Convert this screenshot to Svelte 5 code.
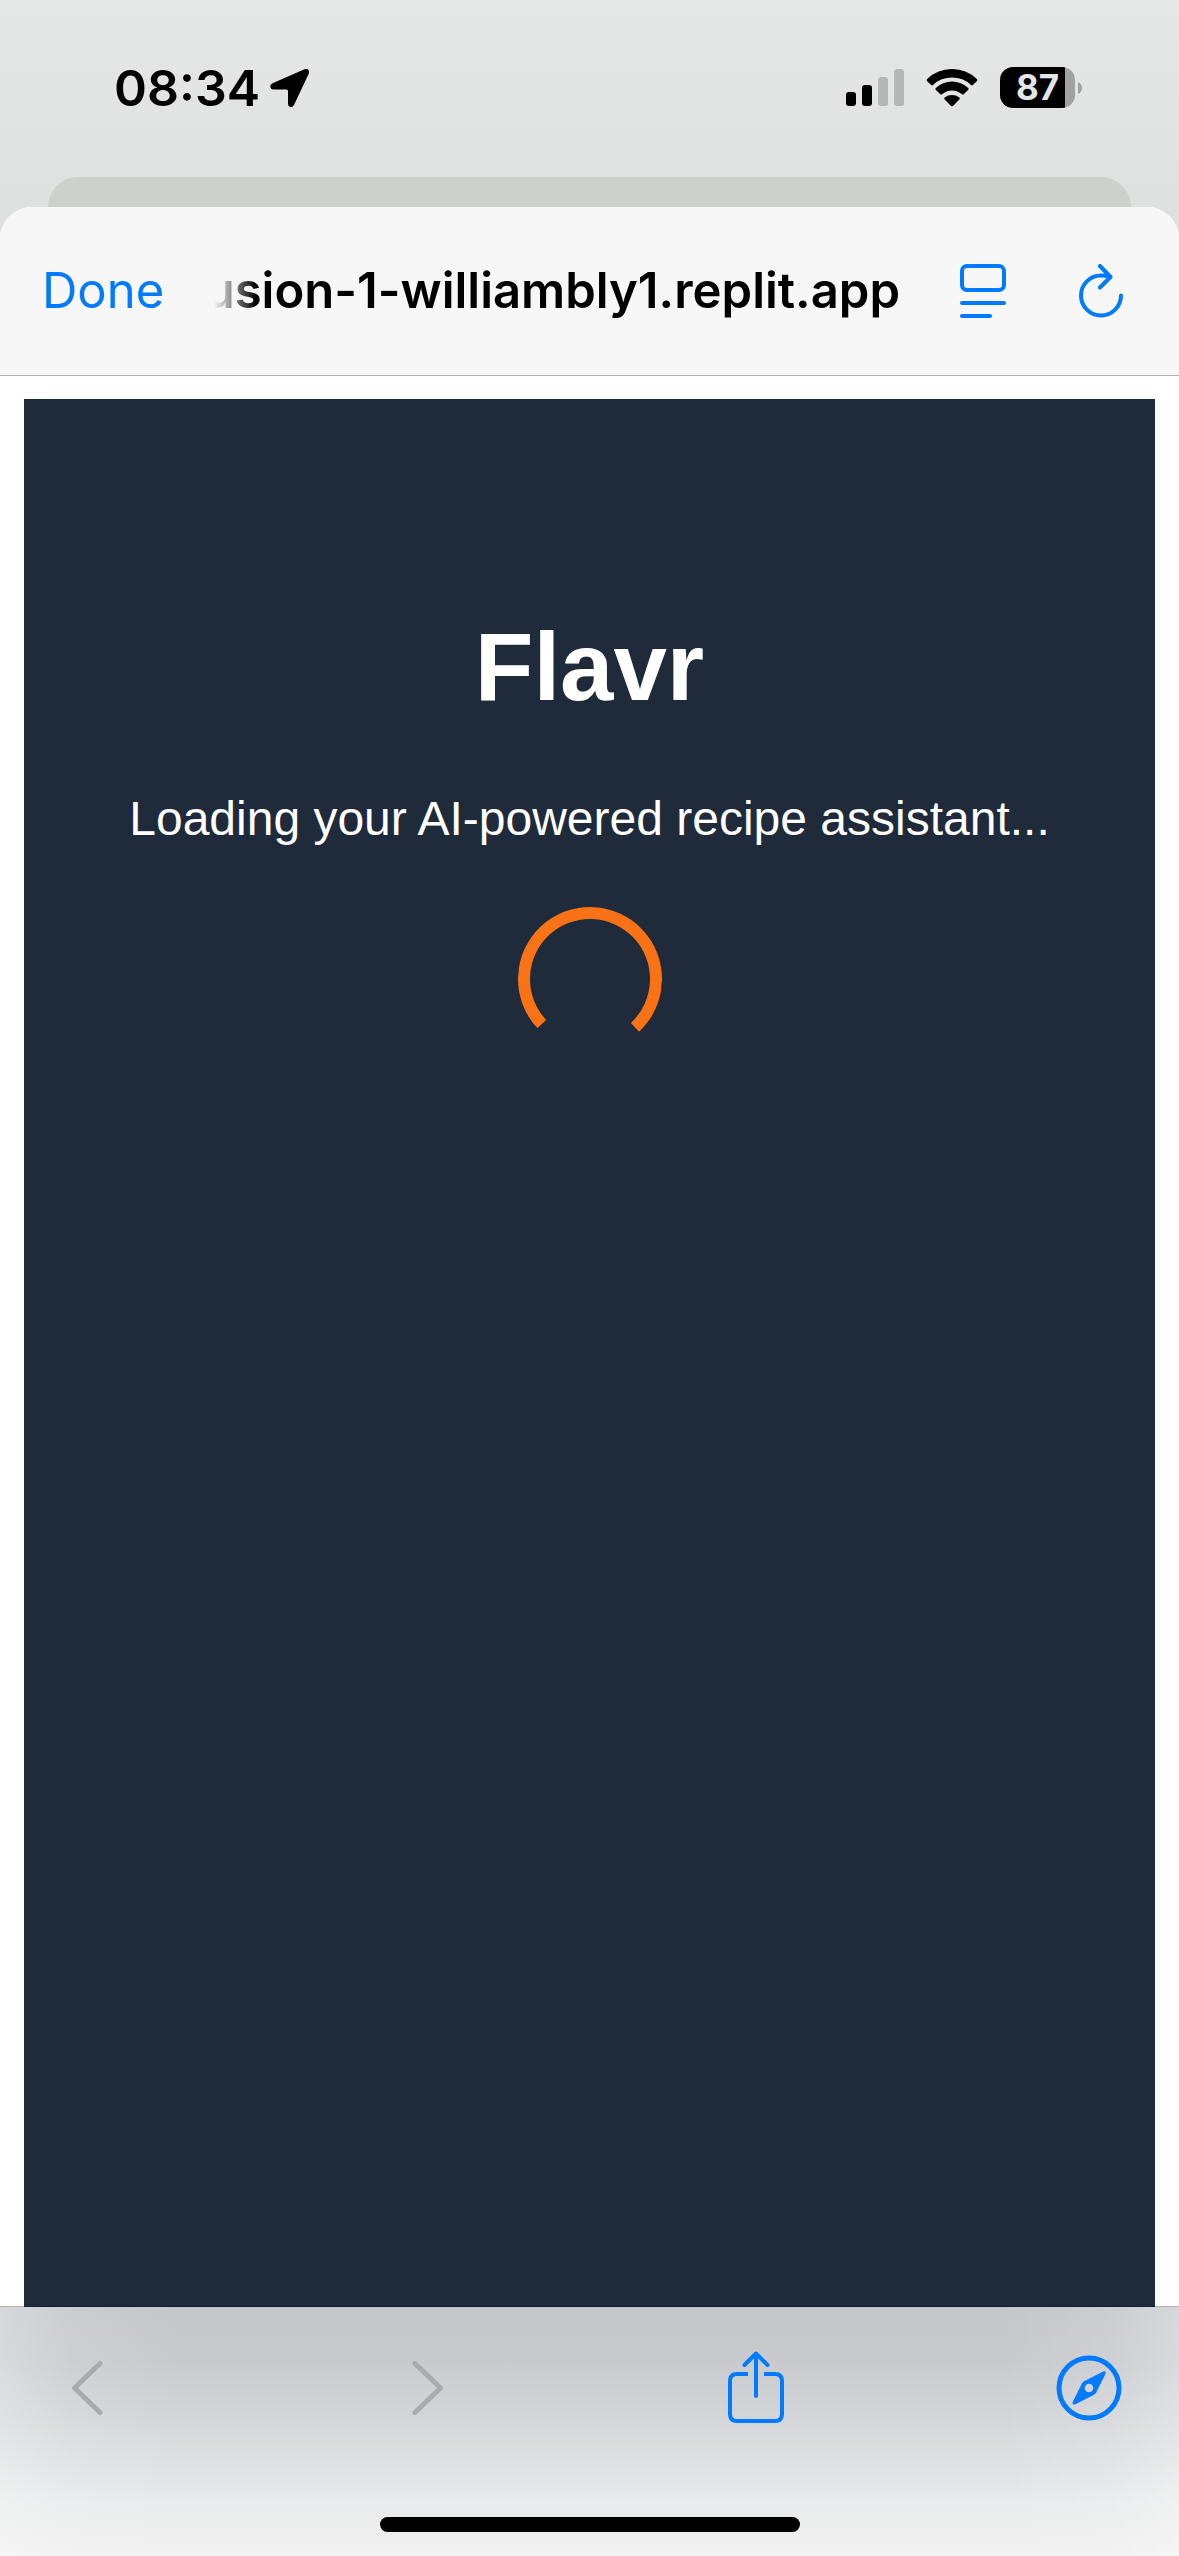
<script>
  const bars = [
    { x: 0, h: 14, on: true },
    { x: 16, h: 21, on: true },
    { x: 32, h: 29, on: false },
    { x: 48, h: 37, on: false },
  ];
</script>

<div class="screen">
  <header class="status">
    <div class="clock">
      <time>08:34</time>
      <svg width="40" height="40" viewBox="0 0 40 40" aria-hidden="true">
        <path d="M34.5 1.2C37.500 0 40 2.500 38.800 5.500L24 37Q22.700 39.500 20.500 39Q18 38.500 18 36V23Q18 21.500 16.500 21.500H3.500Q.8 21.500 .3 19Q0 16.500 2.500 15.200Z" />
      </svg>
    </div>
    <div class="indicators">
      <svg width="58" height="37" viewBox="0 0 58 37" aria-hidden="true">
        {#each bars as bar}
          <rect x={bar.x} y={37 - bar.h} width="10" height={bar.h} rx="3" class:dim={!bar.on} />
        {/each}
      </svg>
      <svg width="52" height="38" viewBox="0 0 52 38" aria-hidden="true">
        <path d="M1.200 12.200Q0 11 1.200 9.900A36 36 0 0 1 50.800 9.900Q52 11 50.800 12.200L46.800 16Q45.900 16.800 45 16A27.500 27.500 0 0 0 7 16Q6.100 16.800 5.200 16Z" />
        <path d="M9.700 20.800Q8.800 19.800 9.800 18.900A24 24 0 0 1 42.200 18.900Q43.200 19.800 42.300 20.800L37.700 25.200Q36.900 25.900 36 25.200A15 15 0 0 0 16 25.200Q15.100 25.900 14.300 25.200Z" />
        <path d="M18.500 30.300Q17.700 29.300 18.700 28.600A12 12 0 0 1 33.300 28.600Q34.300 29.300 33.500 30.300L27 36.900Q26 37.800 25 36.900Z" />
      </svg>
      <div class="battery">
        <span class="level">87</span>
        <svg width="4" height="12" viewBox="0 0 4 12" aria-hidden="true">
          <path d="M0 0Q4 2 4 6T0 12Z" />
        </svg>
      </div>
    </div>
  </header>

  <div class="card-behind"></div>

  <div class="sheet">
    <nav class="topbar" aria-label="Page">
      <button class="done" type="button">Done</button>
      <div class="address"><span>usion-1-williambly1.replit.app</span></div>
      <button type="button" aria-label="Page menu">
        <svg width="46" height="54" viewBox="0 0 46 54" class="line">
          <rect x="2" y="2" width="42" height="24" rx="5" />
          <path d="M2 39H44M2 52H30" />
        </svg>
      </button>
      <button type="button" aria-label="Reload">
        <svg width="46" height="54" viewBox="0 0 46 54" class="line">
          <path d="M43 31.500A20 20 0 1 1 23 11.500Q27.500 11.500 31.500 12.700M22 2L32.500 13L22 23.500" />
        </svg>
      </button>
    </nav>

    <main class="page">
      <section class="app">
        <h1>Flavr</h1>
        <p>Loading your AI-powered recipe assistant...</p>
        <div class="spinner" role="status" aria-label="Loading"></div>
      </section>
    </main>

    <footer class="bottombar">
      <nav class="tools" aria-label="Browser">
        <button class="wide" type="button" aria-label="Back" disabled>
          <svg width="32" height="56" viewBox="0 0 32 56" class="line">
            <path d="M29 3.500L3.500 28L29 52.500" />
          </svg>
        </button>
        <button class="wide" type="button" aria-label="Forward" disabled>
          <svg width="32" height="56" viewBox="0 0 32 56" class="line">
            <path d="M3 3.500L28.500 28L3 52.500" />
          </svg>
        </button>
        <button class="share" type="button" aria-label="Share">
          <svg width="58" height="74" viewBox="0 0 58 74" class="line">
            <path d="M21 23H10Q3 23 3 30V63Q3 70 10 70H48Q55 70 55 63V30Q55 23 48 23H37" class="butt" />
            <path d="M29 45V3M17.500 14L29 2.500L40.500 14" />
          </svg>
        </button>
        <button class="open" type="button" aria-label="Open in Safari">
          <svg width="66" height="66" viewBox="0 0 66 66">
            <circle cx="33" cy="33" r="30" class="ring" />
            <path fill-rule="evenodd" d="M47.200 16.600Q50.500 15.600 49.400 19L40.200 37.400Q39.500 38.900 38 39.700L19.500 49.300Q15.500 50.500 16.800 46.800L25.900 28.500Q26.600 27 28 26.300ZM33 28.700A4.300 4.300 0 1 0 33 37.300A4.300 4.300 0 1 0 33 28.700Z" class="needle" />
          </svg>
        </button>
      </nav>
      <div class="home"></div>
    </footer>
  </div>
</div>

<style>
  :global(body) {
    background: #dee1df;
  }
  .screen {
    min-height: 100vh;
    display: flex;
    flex-direction: column;
    background: linear-gradient(#e6e8e7, #dee1e0 200px);
    font-family: Inter, "Liberation Sans", sans-serif;
    color: #000;
  }
  svg {
    display: block;
    flex: none;
  }
  .status {
    height: 177px;
    box-sizing: border-box;
    padding: 58px 97px 60px 114px;
    display: flex;
    justify-content: space-between;
    align-items: center;
  }
  .clock,
  .indicators,
  .battery {
    display: flex;
    align-items: center;
  }
  .clock {
    gap: 10px;
    font-size: 50px;
    line-height: 60px;
    font-weight: 600;
  }
  .indicators {
    gap: 22px;
  }
  .dim {
    fill: #b5b8b6;
  }
  .battery {
    gap: 3px;
    fill: #a0a2a1;
  }
  .level {
    width: 75px;
    height: 41px;
    border-radius: 13px;
    background: linear-gradient(90deg, #000 65px, #a0a2a1 65px);
    color: #e3e5e4;
    font-size: 35px;
    line-height: 41px;
    font-weight: 700;
    text-align: center;
  }
  .card-behind {
    height: 30px;
    margin: 0 48px;
    border-radius: 30px 30px 0 0;
    background: #ced0cd;
  }
  .sheet {
    flex: 1;
    display: flex;
    flex-direction: column;
    border-radius: 32px 32px 0 0;
    background: #fff;
    overflow: hidden;
  }
  button {
    margin: 0;
    padding: 0;
    border: 0;
    background: none;
    font: inherit;
    color: #007aff;
    display: flex;
    justify-content: center;
    align-items: center;
  }
  button:disabled {
    color: #aaabac;
  }
  .line {
    fill: none;
    stroke: currentColor;
    stroke-width: 4;
    stroke-linecap: round;
    stroke-linejoin: round;
  }
  .topbar {
    height: 169px;
    box-sizing: border-box;
    padding: 0 55px 0 42px;
    display: flex;
    align-items: center;
    background: #f7f7f7;
    border-bottom: 1px solid #b0b0b1;
    font-size: 49px;
    line-height: 60px;
  }
  .address {
    flex: 1;
    min-width: 0;
    margin: 0 60px 0 50px;
    display: flex;
    justify-content: flex-end;
    overflow: hidden;
    white-space: nowrap;
    font-weight: 600;
    mask-image: linear-gradient(90deg, transparent, #000 42px);
  }
  .topbar button + button {
    margin-left: 72px;
  }
  .page {
    flex: 1;
    padding: 23px 24px 0;
    display: flex;
  }
  .app {
    flex: 1;
    padding: 212px 24px 24px;
    background: #1f2a3b;
    color: #fff;
    font-family: "Liberation Sans", Arial, sans-serif;
    text-align: center;
  }
  h1 {
    margin: 0 0 64px;
    font-size: 96px;
    line-height: 112px;
    font-weight: 700;
  }
  p {
    margin: 0 0 56px;
    font-size: 48px;
    line-height: 64px;
  }
  .spinner {
    width: 120px;
    height: 120px;
    margin: 0 auto;
    border: 12px solid #f97316;
    border-bottom-color: transparent;
    border-radius: 50%;
    transform: rotate(2deg);
  }
  .bottombar {
    margin-top: -1px;
    height: 250px;
    box-sizing: border-box;
    position: relative;
    border-top: 1px solid rgba(0, 0, 0, 0.3);
    background:
      linear-gradient(90deg, rgba(255, 255, 255, 0.3), rgba(255, 255, 255, 0.1) 70px, rgba(255, 255, 255, 0) 180px, rgba(255, 255, 255, 0) calc(100% - 180px), rgba(255, 255, 255, 0.1) calc(100% - 70px), rgba(255, 255, 255, 0.3)),
      linear-gradient(#c4c8cb, #c9cace 22%, #d3d4d8 42%, #dfe0e1 62%, #e9eaeb 78%, #f1f1f1);
    background-clip: padding-box;
    display: flex;
    flex-direction: column;
    justify-content: space-between;
    align-items: center;
    padding-bottom: 24px;
  }
  .tools {
    align-self: stretch;
    height: 161px;
    padding: 0 38px 0 39px;
    display: flex;
    justify-content: space-between;
    align-items: center;
  }
  .wide {
    width: 96px;
  }
  .wide .line {
    stroke-width: 5;
  }
  .share {
    width: 72px;
  }
  .butt {
    stroke-linecap: butt;
  }
  .open {
    width: 104px;
  }
  .ring {
    fill: none;
    stroke: currentColor;
    stroke-width: 5;
  }
  .needle {
    fill: currentColor;
  }
  .home {
    width: 420px;
    height: 15px;
    border-radius: 8px;
    background: #000;
  }
</style>
